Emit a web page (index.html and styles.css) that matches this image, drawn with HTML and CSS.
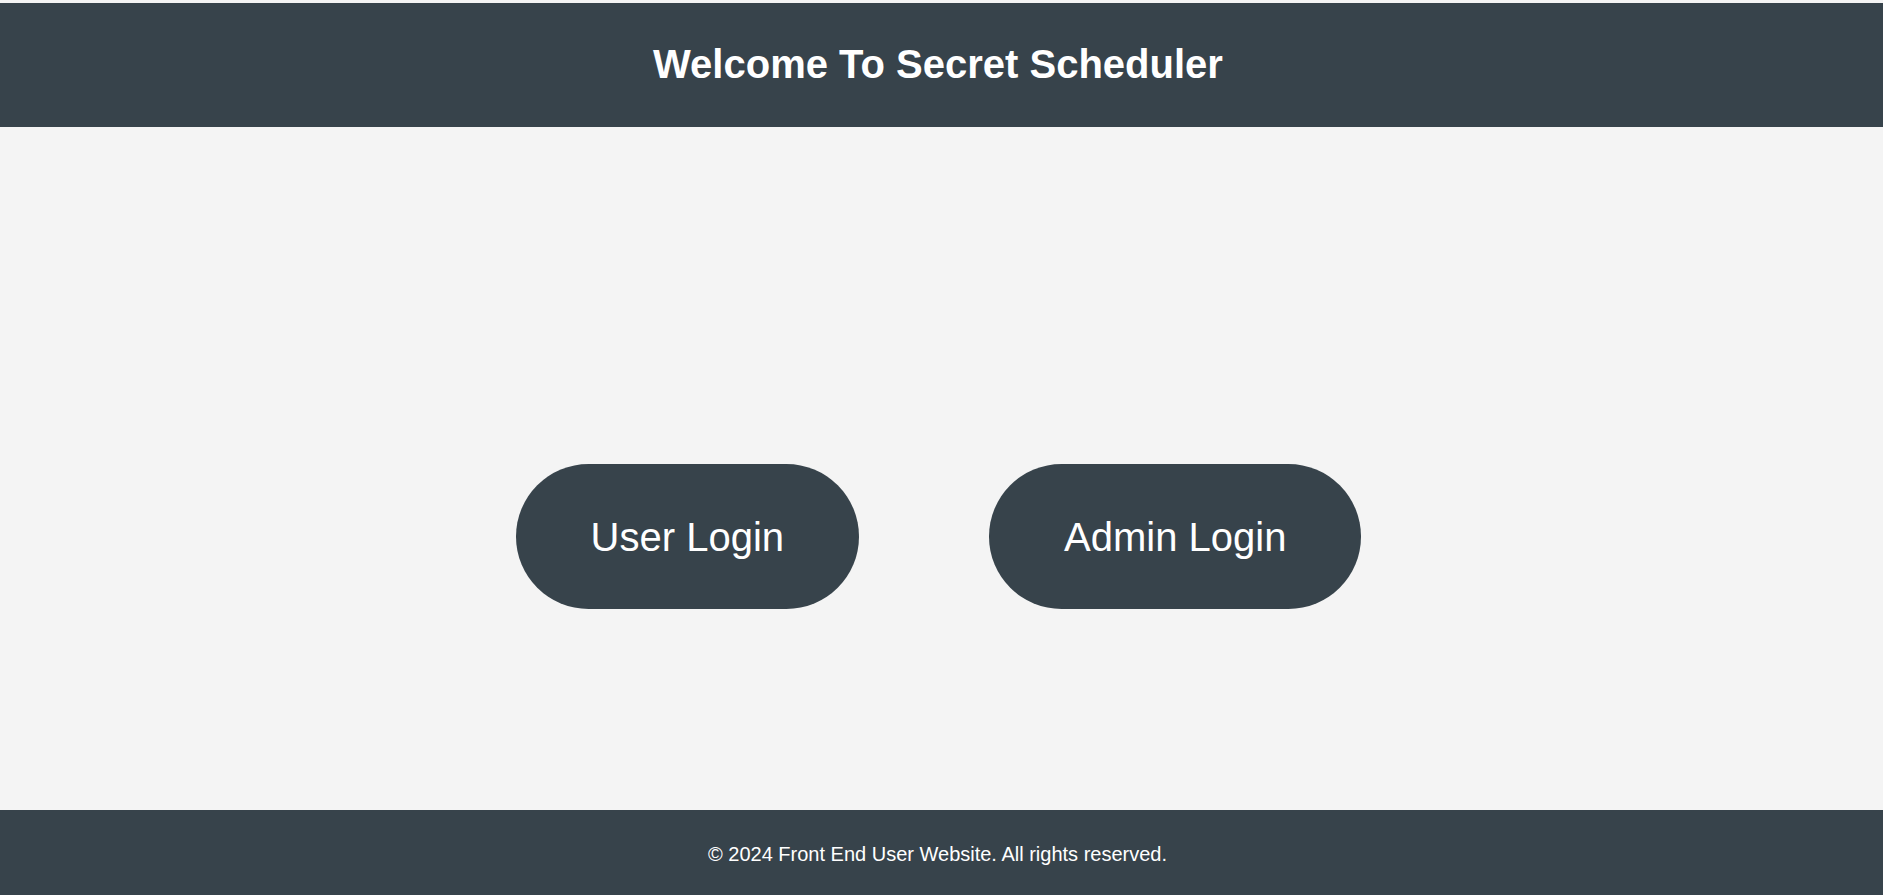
FILE: index.html
```html
<!DOCTYPE html>
<html lang="en">
<head>
<meta charset="UTF-8">
<title>Secret Scheduler</title>
<link rel="stylesheet" href="styles.css">
</head>
<body>
<div class="page">
  <header class="site-header">
    <h1 class="title">Welcome To Secret Scheduler</h1>
  </header>
  <main class="main">
    <div class="actions">
      <button class="pill-btn">User Login</button>
      <button class="pill-btn">Admin Login</button>
    </div>
  </main>
  <footer class="site-footer">
    <p class="copy">&copy; 2024 Front End User Website. All rights reserved.</p>
  </footer>
</div>
</body>
</html>
```

FILE: styles.css
```css
html, body {
  margin: 0;
  padding: 0;
  height: 100%;
}
body {
  background: #f4f4f4;
  font-family: "Liberation Sans", Arial, sans-serif;
  color: #ffffff;
}
.page {
  display: flex;
  flex-direction: column;
  min-height: 100vh;
  box-sizing: border-box;
  padding-top: 3px;
}
.site-header {
  background: #37434b;
  padding: 38px 7px 40px 0;
  text-align: center;
}
.title {
  margin: 0;
  font-size: 40px;
  font-weight: bold;
  line-height: 46px;
}
.main {
  flex: 1;
  display: flex;
  justify-content: center;
  align-items: flex-start;
  padding: 337px 6px 0 0;
}
.actions {
  display: flex;
  gap: 130px;
}
.pill-btn {
  background: #37434b;
  color: #ffffff;
  border: none;
  border-radius: 75px;
  padding: 50px 75px 49px;
  font-family: "Liberation Sans", Arial, sans-serif;
  font-size: 40px;
  line-height: 46px;
  cursor: pointer;
}
.site-footer {
  background: #37434b;
  height: 85px;
  box-sizing: border-box;
  padding: 33px 8px 0 0;
  text-align: center;
}
.copy {
  margin: 0;
  font-size: 20px;
  line-height: 23px;
}
```
